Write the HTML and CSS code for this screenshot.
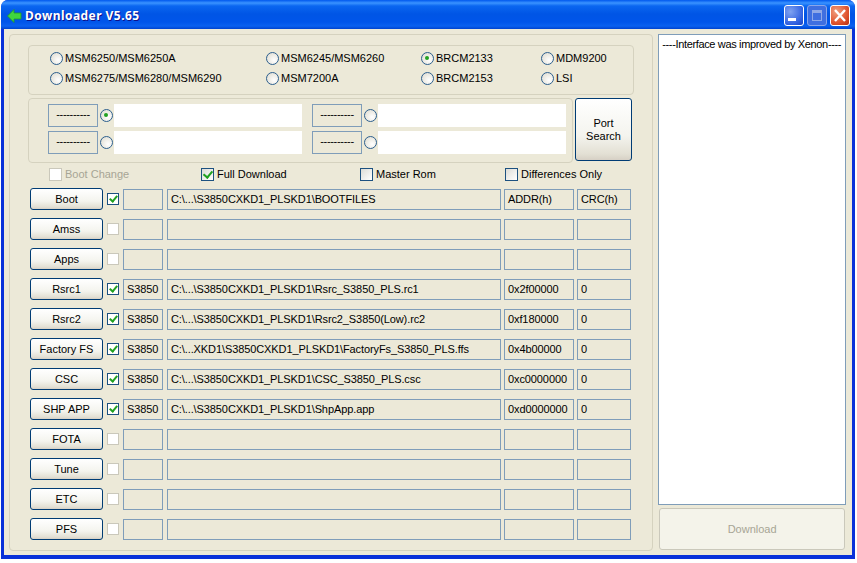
FILE: index.html
```html
<!DOCTYPE html>
<html lang="en">
<head>
<meta charset="utf-8">
<title>Downloader V5.65</title>
<link rel="stylesheet" href="styles.css">
</head>
<body>
<div class="window">
  <header class="titlebar">
    <svg class="app-icon" width="15" height="14" viewBox="0 0 15 14"><path d="M7 0.5 L0.5 7 L7 13.5 L7 10 L14 10 L14 4 L7 4 Z" fill="#3fd63f" stroke="#1e9a2a" stroke-width="0.8"/></svg>
    <div class="title">Downloader V5.65</div>
    <div class="caption-btns">
      <div class="cap cap-min"><svg width="20" height="21" viewBox="0 0 20 21"><rect x="4" y="13" width="8" height="3" fill="#fff"/></svg></div>
      <div class="cap cap-max"><svg width="20" height="21" viewBox="0 0 20 21"><path d="M5 5h10v11H5z M6 8v7h8V8z" fill="#8fa9e8" fill-rule="evenodd"/></svg></div>
      <div class="cap cap-close"><svg width="20" height="21" viewBox="0 0 20 21"><path d="M5 5l10 11M15 5L5 16" stroke="#fff" stroke-width="2.4"/></svg></div>
    </div>
  </header>
  <div class="client">
    <main class="main-group">
      <section class="chip-group">
        <label class="opt"><span class="radio"></span>MSM6250/MSM6250A</label>
        <label class="opt"><span class="radio"></span>MSM6245/MSM6260</label>
        <label class="opt"><span class="radio on"></span>BRCM2133</label>
        <label class="opt"><span class="radio"></span>MDM9200</label>
        <label class="opt"><span class="radio"></span>MSM6275/MSM6280/MSM6290</label>
        <label class="opt"><span class="radio"></span>MSM7200A</label>
        <label class="opt"><span class="radio"></span>BRCM2153</label>
        <label class="opt"><span class="radio"></span>LSI</label>
      </section>
      <section class="port-line">
        <div class="port-group">
          <div class="port"><div class="port-btn">----------</div><span class="radio on"></span><div class="port-input"></div></div>
          <div class="port"><div class="port-btn">----------</div><span class="radio"></span><div class="port-input"></div></div>
          <div class="port"><div class="port-btn">----------</div><span class="radio"></span><div class="port-input"></div></div>
          <div class="port"><div class="port-btn">----------</div><span class="radio"></span><div class="port-input"></div></div>
        </div>
        <div class="xp-btn port-search">Port<br>Search</div>
      </section>
      <section class="options">
        <label class="opt disabled"><span class="check plain"></span>Boot Change</label>
        <label class="opt"><span class="check on"></span>Full Download</label>
        <label class="opt"><span class="check"></span>Master Rom</label>
        <label class="opt"><span class="check"></span>Differences Only</label>
      </section>
      <section class="rows">
        <div class="row"><div class="xp-btn row-btn">Boot</div><span class="check small on"></span><div class="field f-model"></div><div class="field f-path">C:\...\S3850CXKD1_PLSKD1\BOOTFILES</div><div class="field f-addr">ADDR(h)</div><div class="field f-crc">CRC(h)</div></div>
        <div class="row"><div class="xp-btn row-btn">Amss</div><span class="check small plain"></span><div class="field f-model"></div><div class="field f-path"></div><div class="field f-addr"></div><div class="field f-crc"></div></div>
        <div class="row"><div class="xp-btn row-btn">Apps</div><span class="check small plain"></span><div class="field f-model"></div><div class="field f-path"></div><div class="field f-addr"></div><div class="field f-crc"></div></div>
        <div class="row"><div class="xp-btn row-btn">Rsrc1</div><span class="check small on"></span><div class="field f-model">S3850</div><div class="field f-path">C:\...\S3850CXKD1_PLSKD1\Rsrc_S3850_PLS.rc1</div><div class="field f-addr">0x2f00000</div><div class="field f-crc">0</div></div>
        <div class="row"><div class="xp-btn row-btn">Rsrc2</div><span class="check small on"></span><div class="field f-model">S3850</div><div class="field f-path">C:\...\S3850CXKD1_PLSKD1\Rsrc2_S3850(Low).rc2</div><div class="field f-addr">0xf180000</div><div class="field f-crc">0</div></div>
        <div class="row"><div class="xp-btn row-btn">Factory FS</div><span class="check small on"></span><div class="field f-model">S3850</div><div class="field f-path">C:\...XKD1\S3850CXKD1_PLSKD1\FactoryFs_S3850_PLS.ffs</div><div class="field f-addr">0x4b00000</div><div class="field f-crc">0</div></div>
        <div class="row"><div class="xp-btn row-btn">CSC</div><span class="check small on"></span><div class="field f-model">S3850</div><div class="field f-path">C:\...\S3850CXKD1_PLSKD1\CSC_S3850_PLS.csc</div><div class="field f-addr">0xc0000000</div><div class="field f-crc">0</div></div>
        <div class="row"><div class="xp-btn row-btn">SHP APP</div><span class="check small on"></span><div class="field f-model">S3850</div><div class="field f-path">C:\...\S3850CXKD1_PLSKD1\ShpApp.app</div><div class="field f-addr">0xd0000000</div><div class="field f-crc">0</div></div>
        <div class="row"><div class="xp-btn row-btn">FOTA</div><span class="check small plain"></span><div class="field f-model"></div><div class="field f-path"></div><div class="field f-addr"></div><div class="field f-crc"></div></div>
        <div class="row"><div class="xp-btn row-btn">Tune</div><span class="check small plain"></span><div class="field f-model"></div><div class="field f-path"></div><div class="field f-addr"></div><div class="field f-crc"></div></div>
        <div class="row"><div class="xp-btn row-btn">ETC</div><span class="check small plain"></span><div class="field f-model"></div><div class="field f-path"></div><div class="field f-addr"></div><div class="field f-crc"></div></div>
        <div class="row"><div class="xp-btn row-btn">PFS</div><span class="check small plain"></span><div class="field f-model"></div><div class="field f-path"></div><div class="field f-addr"></div><div class="field f-crc"></div></div>
      </section>
    </main>
    <aside class="side">
      <div class="log">----Interface was improved by Xenon----</div>
      <div class="download">Download</div>
    </aside>
  </div>
</div>
</body>
</html>
```
FILE: styles.css
```css
* { box-sizing: border-box; }
html, body { margin: 0; padding: 0; background: #fff; }
body { width: 857px; height: 563px; overflow: hidden; font-family: "Liberation Sans", Arial, sans-serif; font-size: 11px; color: #000; }

.window { width: 854px; height: 559px; margin-left: 1px; display: flex; flex-direction: column; background: #0831d9; border-radius: 7px 7px 0 0; overflow: hidden; }
.titlebar { height: 29px; flex: none; display: flex; align-items: center; padding: 2px 5px 0 6px; background: linear-gradient(180deg, #0058ee 0, #3a93ff 3px, #0a66f0 6px, #0055e5 14px, #0055ea 22px, #0a61f0 26px, #0043cf 29px); }
.app-icon { flex: none; }
.title { margin-left: 3px; flex: 1; font-family: "Noto Sans", sans-serif; font-weight: 700; font-size: 12px; color: #fff; text-shadow: 1px 1px #0f1089; letter-spacing: 0.45px; }
.caption-btns { display: flex; gap: 3px; }
.cap { width: 20px; height: 21px; border: 1px solid #fff; border-radius: 3px; }
.cap svg { display: block; margin: -1px; }
.cap-min { background: radial-gradient(circle at 30% 30%, #7fa2f0, #2f5fe0 70%, #1a43c0); }
.cap-max { background: #3f6fe0; border-color: #8aa6ea; }
.cap-close { background: radial-gradient(circle at 30% 30%, #f0a080, #e0552f 60%, #b8300f); }

.client { flex: 1; min-height: 0; margin: 0 3px 4px 3px; padding: 5px 6px 5px 5px; background: #ece9d8; display: flex; gap: 5px; }
.main-group { width: 645px; height: 517px; border: 1px solid #d5d2bf; border-radius: 4px; padding: 10px 18px 0; display: flex; flex-direction: column; align-items: stretch; }

.opt { display: flex; align-items: center; gap: 2px; white-space: nowrap; line-height: 14px; }
.radio { display: inline-block; flex: none; width: 13px; height: 13px; border-radius: 50%; border: 1.5px solid #2c5f8e; background: radial-gradient(circle at 65% 65%, #fff, #dcd9cc); position: relative; }
.radio.on::after { content: ""; position: absolute; left: 3px; top: 3px; width: 4px; height: 4px; border-radius: 50%; background: #21a121; }
.check { display: inline-block; flex: none; width: 13px; height: 13px; border: 1px solid #1c5180; background: linear-gradient(135deg, #dcdcd7, #fff); position: relative; }
.check.plain { background: #fff; border-color: #cac8bb; }
.check.small { width: 12px; height: 12px; }
.check.on::after { content: ""; position: absolute; left: 3px; top: 0; width: 4px; height: 7px; border: solid #21a121; border-width: 0 2px 2px 0; transform: rotate(40deg); }
.check.small.on { background: #fff; }
.check.small.on::after { left: 3px; top: 0; width: 3px; height: 6px; }

.chip-group { height: 50px; border: 1px solid #d5d2bf; border-radius: 4px; padding: 2px 0 0 21px; display: grid; grid-template-columns: 216px 155px 120px 1fr; grid-template-rows: 20px 20px; }

.port-line { margin-top: 3px; display: flex; gap: 2px; align-items: flex-start; }
.port-group { width: 545px; height: 65px; border: 1px solid #d5d2bf; border-radius: 4px; padding: 5px 0 0 19px; display: grid; grid-template-columns: 254px 254px; column-gap: 10px; grid-template-rows: 23px 23px; row-gap: 4px; }
.port { display: flex; align-items: center; }
.port-btn { width: 50px; height: 23px; border: 1px solid #7f9db9; text-align: center; line-height: 18px; letter-spacing: -0.3px; }
.port .radio { margin: 0 1px 0 2px; }
.port-input { width: 188px; height: 23px; background: #fff; }

.xp-btn { border: 1px solid #003c74; border-radius: 3px; background: linear-gradient(180deg, #fff 0, #f4f4ee 60%, #e3e0d4 90%, #d6d0c5 100%); text-align: center; }
.port-search { width: 57px; height: 63px; padding-top: 18px; line-height: 13px; }

.options { margin-top: 4px; height: 14px; padding-left: 21px; display: grid; grid-template-columns: 152px 159px 145px 1fr; }
.options .opt { gap: 3px; }
.disabled { color: #a7a595; }

.rows { margin-top: 7px; display: flex; flex-direction: column; gap: 8px; padding-left: 2px; }
.row { height: 22px; display: flex; align-items: center; }
.row-btn { width: 73px; height: 22px; line-height: 20px; }
.row .check { margin: 0 4px; }
.field { height: 21px; border: 1px solid #7f9db9; line-height: 18px; padding-left: 3px; white-space: nowrap; overflow: hidden; letter-spacing: -0.1px; }
.f-model { width: 40px; margin-right: 4px; }
.f-path { width: 334px; margin-right: 3px; }
.f-addr { width: 70px; margin-right: 3px; }
.f-crc { width: 54px; }

.side { width: 188px; display: flex; flex-direction: column; gap: 3px; }
.log { height: 471px; border: 1px solid #7f9db9; background: #fff; padding: 1px 3px; white-space: nowrap; line-height: 16px; letter-spacing: -0.35px; overflow: hidden; }
.download { margin: 0 1px; height: 42px; border: 1px solid #cac8bb; border-radius: 3px; background: #f4f3ea; color: #a7a595; text-align: center; line-height: 40px; }
```
